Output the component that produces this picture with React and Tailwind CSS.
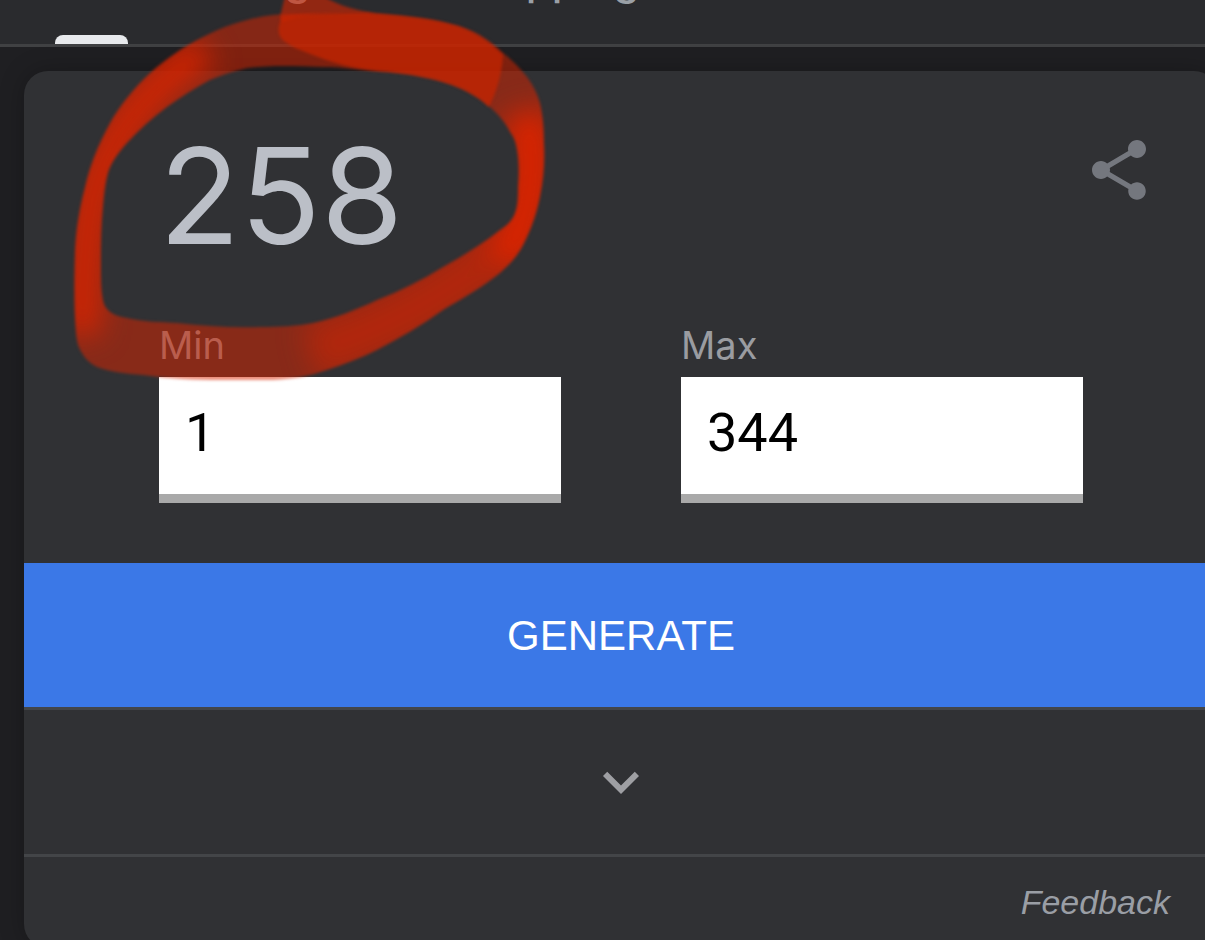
import React, { useState } from 'react';
import { MdShare, MdExpandMore } from 'react-icons/md';

const TABS = ['All', 'Images', 'Shopping'];

const RING =
  'M293 14 C280 14 270 15 260 17 C240 21 222 27 203 37 C183 47 167 58 150 73 C134 88 120 105 110 123 C98 145 90 165 85 187 C79 210 76 230 75 250 C74 285 74 310 76 333 C77 342 78 347 82 353 C86 360 91 364 97 367 C111 372 127 374 143 375 C170 379 195 380 220 380 L273 380 C293 379 310 376 327 370 C345 364 361 358 377 350 C400 338 422 325 443 310 C463 298 483 287 500 273 C513 262 521 251 527 237 C533 224 537 212 540 197 C544 178 545 160 544 143 C544 128 543 116 540 103 C537 93 533 85 527 77 C520 68 512 60 503 53 C496 46 488 40 480 35 C471 30 461 26 450 24 C437 20 424 18 410 17 C396 15 381 14 367 13 Z' +
  'M343 68 C338 67 333 67 327 67 C295 66 270 65 247 68 C234 71 222 75 210 80 C195 88 181 97 167 107 C152 118 139 130 127 143 C118 153 111 163 108 173 C105 184 104 195 103 207 C101 228 101 247 101 267 C101 279 101 290 103 300 C104 305 106 308 108 310 C113 315 120 317 127 318 C143 322 160 322 177 323 C205 326 232 328 260 327 C280 327 297 326 313 323 C335 318 356 310 377 300 C400 291 422 280 443 267 C463 256 482 244 500 230 C508 225 513 219 515 213 C518 205 518 196 518 187 C519 174 519 162 517 150 C516 143 514 137 510 132 C505 122 498 114 490 107 C481 99 471 93 460 88 C449 83 438 80 427 78 C410 74 394 72 377 71 C366 70 354 69 343 68 Z';

const Marker = () => (
  <svg
    className="pointer-events-none absolute left-0 top-0"
    width="600"
    height="400"
    viewBox="0 0 600 400"
    fill="none"
    aria-hidden="true"
  >
    <defs>
      <filter id="edge" x="-10%" y="-10%" width="120%" height="120%" colorInterpolationFilters="sRGB">
        <feGaussianBlur stdDeviation="1.5" />
      </filter>
      <filter id="soft" filterUnits="userSpaceOnUse" x="0" y="0" width="600" height="400" colorInterpolationFilters="sRGB">
        <feGaussianBlur stdDeviation="14" />
      </filter>
      <mask id="ring" maskUnits="userSpaceOnUse" x="0" y="0" width="600" height="400">
        <path d={RING} fill="#fff" fillRule="evenodd" filter="url(#edge)" />
      </mask>
    </defs>
    <g mask="url(#ring)">
      <rect width="600" height="400" fill="#d92400" fillOpacity="0.52" />
      <g stroke="#d92400" filter="url(#soft)">
        <path d="M205 50 C145 90 108 140 93 195 C84 240 83 285 82 335" strokeWidth="36" strokeOpacity="0.85" />
        <path d="M310 352 C390 330 460 285 512 243" strokeWidth="56" strokeOpacity="0.5" />
        <path d="M505 262 C532 215 538 160 524 112" strokeWidth="44" strokeOpacity="1" />
      </g>
    </g>
    {/* second pass of the marker where the stroke starts */}
    <path
      d="M285 -4 L280 17 L282 22 C300 14 340 13 376 14 C360 10 342 8 323 -4 Z"
      fill="#d92400"
      fillOpacity="0.6"
      filter="url(#edge)"
    />
    <path
      d="M282 18 C310 13 340 13 367 13 C400 15 425 18 450 24 C473 30 490 42 503 55 C502 73 497 91 489 107 C480 98 470 92 460 88 C435 77 405 73 377 71 C350 68 330 62 313 55 C300 50 292 47 287 43 C278 38 276 29 282 18 Z"
      fill="#c82400"
      fillOpacity="0.72"
      filter="url(#edge)"
    />
  </svg>
);

const NumberField = ({ id, label, value, onChange }) => (
  <div className="flex min-w-0 flex-col gap-[9px]">
    <label htmlFor={id} className="text-[38px] leading-[46px] text-[#9a9ca1]">
      {label}
    </label>
    <input
      id={id}
      type="text"
      inputMode="numeric"
      value={value}
      onChange={(e) => onChange(e.target.value)}
      className="h-[126px] w-full border-b-[9px] border-[#a9a9a9] bg-white px-[26px] pb-[6px] font-['Roboto',sans-serif] text-[54px] text-black outline-none"
    />
  </div>
);

const App = () => {
  const [min, setMin] = useState('1');
  const [max, setMax] = useState('344');
  const [result, setResult] = useState(258);

  const generate = () => {
    const low = Number(min);
    const high = Number(max);
    if (Number.isNaN(low) || Number.isNaN(high) || low > high) return;
    setResult(Math.floor(Math.random() * (high - low + 1)) + low);
  };

  return (
    <div className="relative h-screen overflow-hidden bg-[#1f1f22] font-['Inter',sans-serif]">
      {/* Search tabs, scrolled almost out of view */}
      <nav className="flex h-[47px] items-end gap-[78px] border-b-[3px] border-[#404143] bg-[#2a2b2e] pl-[55px]">
        {TABS.map((tab, i) => (
          <a
            key={tab}
            href="#"
            className="flex flex-col items-center text-[42px] font-medium leading-[48px] text-[#9aa0a6]"
          >
            <span className={i === 0 ? 'mb-[31px]' : 'mb-[31px] px-[6px]'}>{tab}</span>
            {i === 0 ? (
              <span className="h-[9px] w-[73px] rounded-t-lg bg-[#e8eaed]" />
            ) : (
              <span className="h-[9px]" />
            )}
          </a>
        ))}
      </nav>

      {/* Random number card */}
      <main className="-mr-[13px] ml-6 mt-6 overflow-hidden rounded-3xl bg-[#303134] shadow-[0_0_24px_rgba(0,0,0,0.25)]">
        <div className="flex items-start justify-between pl-[135px] pr-[63px] pt-[54px]">
          <output className="text-[133px] leading-[142px] text-[#bbbfc7]">{result}</output>
          <button type="button" aria-label="Share" className="mt-[9px] text-[#74777e]">
            <MdShare size={72} />
          </button>
        </div>

        <div className="mt-[55px] grid grid-cols-2 gap-[120px] px-[135px] pb-[60px]">
          <NumberField id="min" label="Min" value={min} onChange={setMin} />
          <NumberField id="max" label="Max" value={max} onChange={setMax} />
        </div>

        <button
          type="button"
          onClick={generate}
          className="block h-36 w-full bg-[#3b78e7] font-['Liberation_Sans',sans-serif] text-[42px] text-white"
        >
          GENERATE
        </button>

        <button
          type="button"
          aria-label="Show more tools"
          className="flex h-[150px] w-full items-center justify-center border-y-[3px] border-[#434548] text-[#9e9fa3]"
        >
          <MdExpandMore size={72} />
        </button>

        <div className="flex h-[91px] items-center justify-end pr-12">
          <a href="#" className="font-['Liberation_Sans',sans-serif] text-[34px] italic text-[#9a9ea5]">
            Feedback
          </a>
        </div>
      </main>

      <Marker />
    </div>
  );
};

export default App;
